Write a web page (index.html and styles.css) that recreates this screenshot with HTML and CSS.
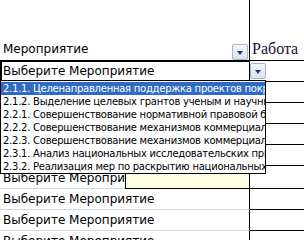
FILE: index.html
```html
<!DOCTYPE html>
<html lang="ru">
<head>
    <meta charset="UTF-8">
    <meta name="viewport" content="width=device-width, initial-scale=1.0">
    <title>Мероприятие</title>
    <link rel="stylesheet" href="styles.css">
</head>
<body>
    <div class="sheet">
        <div class="cell col-a head">Мероприятие<span class="btn filter"></span></div>
        <div class="cell col-b head serif">Работа</div>

        <div class="cell col-a active">Выберите Мероприятие</div>
        <div class="cell col-b"></div>

        <div class="cell col-a grid">Выберите Мероприятие</div>
        <div class="cell col-b"></div>
        <div class="cell col-a grid">Выберите Мероприятие</div>
        <div class="cell col-b"></div>
        <div class="cell col-a grid">Выберите Мероприятие</div>
        <div class="cell col-b"></div>
        <div class="cell col-a grid">Выберите Мероприятие</div>
        <div class="cell col-b"></div>
        <div class="cell col-a grid">Выберите Мероприятие</div>
        <div class="cell col-b"></div>
        <div class="cell col-a grid">Выберите Мероприятие</div>
        <div class="cell col-b"></div>
        <div class="cell col-a grid">Выберите Мероприятие</div>
        <div class="cell col-b"></div>
        <div class="cell col-a grid">Выберите Мероприятие</div>
        <div class="cell col-b"></div>

        <!-- data validation popup -->
        <span class="btn picker"></span>
        <div class="tip"></div>
        <ul class="list">
            <li class="selected">2.1.1. Целенаправленная поддержка проектов покрытия потребностей</li>
            <li>2.1.2. Выделение целевых грантов ученым и научным коллективам</li>
            <li>2.2.1. Совершенствование нормативной правовой базы</li>
            <li>2.2.2. Совершенствование механизмов коммерциализации</li>
            <li>2.2.3. Совершенствование механизмов коммерциализации</li>
            <li>2.3.1. Анализ национальных исследовательских приоритетов</li>
            <li>2.3.2. Реализация мер по раскрытию национальных ресурсов</li>
        </ul>
    </div>
</body>
</html>
```

FILE: styles.css
```css
* {
    box-sizing: border-box;
}

body {
    margin: 0;
    background: #fff;
    font-family: 'DejaVu Sans', sans-serif;
    overflow: hidden;
}

.sheet {
    position: relative;
    display: grid;
    grid-template-columns: 250px 1fr;
    grid-template-rows: 61px repeat(5, 21px) 23px;
    grid-auto-rows: 21px;
    width: 304px;
    height: 240px;
}

.cell {
    display: flex;
    align-items: flex-end;
    font-size: 12px;
    line-height: 14px;
    color: #000;
    white-space: nowrap;
    overflow: hidden;
    padding: 0 0 3px 3px;
    border-bottom: 1px solid #000;
}

.col-a {
    border-right: 1px solid #000;
}

.col-a.grid {
    border-bottom-color: #d0d7e5;
}

.head {
    position: relative;
    padding-bottom: 4px;
}

.serif {
    font-family: 'Liberation Serif', serif;
    font-size: 16px;
    line-height: 18px;
    color: #1c0f3c;
    padding-left: 2px;
    padding-bottom: 2px;
}

.active {
    box-shadow: inset 2px 1px 0 #000;
}

.btn {
    position: absolute;
    width: 16px;
    height: 16px;
    border: 1px solid #a7b4c9;
    border-radius: 2px;
    background: linear-gradient(#f4f6fa, #dce2ec);
}

.btn::after {
    content: '';
    position: absolute;
    left: 4px;
    top: 6px;
    border-left: 3px solid transparent;
    border-right: 3px solid transparent;
    border-top: 4px solid #26387a;
}

.filter {
    left: 232px;
    top: 44px;
}

.picker {
    left: 250px;
    top: 63px;
}

.tip {
    position: absolute;
    left: 125px;
    top: 150px;
    width: 125px;
    height: 39px;
    background: #ffffe1;
    border: 1px solid #000;
}

.list {
    position: absolute;
    left: 0;
    top: 80px;
    width: 266px;
    height: 94px;
    margin: 0;
    padding: 1px 0 0;
    list-style: none;
    background: #fff;
    border: 1px solid #000;
    overflow: hidden;
}

.list li {
    height: 13px;
    padding-left: 2px;
    font-size: 10px;
    line-height: 13px;
    letter-spacing: -0.25px;
    white-space: nowrap;
    color: #000;
}

.list li.selected {
    background: #316ac5;
    color: #fff;
}
```
